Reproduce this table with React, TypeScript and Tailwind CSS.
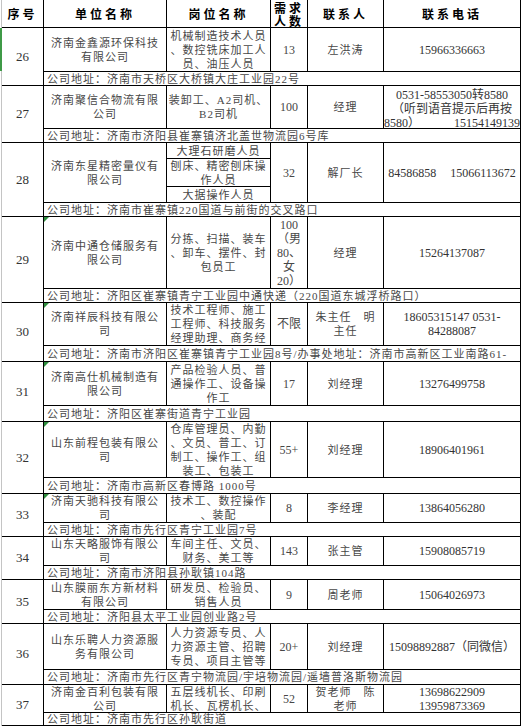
import React from "react";

type Row = {
  no: number;
  company: string[];
  jobs: string[] | string[][];
  count: string[];
  contact: string[];
  phone: React.ReactNode;
  addr: string;
  mark?: boolean;
};

const rows: Row[] = [
  {
    no: 26,
    company: ["济南金鑫源环保科技", "有限公司"],
    jobs: ["机械制造技术人员", "、数控铣床加工人", "员、油压人员"],
    count: ["13"],
    contact: ["左洪涛"],
    phone: "15966336663",
    addr: "公司地址：济南市天桥区大桥镇大庄工业园22号",
  },
  {
    no: 27,
    company: ["济南聚信合物流有限", "公司"],
    jobs: ["装卸工、A2司机、", "B2司机"],
    count: ["100"],
    contact: ["经理"],
    phone: (
      <div className="w-full pt-[3px]">
        <div>0531-58553050转8580</div>
        <div>（听到语音提示后再按</div>
        <div className="flex justify-between">
          <span>8580）</span>
          <span>15154149139</span>
        </div>
      </div>
    ),
    addr: "公司地址：济南市济阳县崔寨镇济北盖世物流园6号库",
  },
  {
    no: 28,
    company: ["济南东星精密量仪有", "限公司"],
    jobs: [["大理石研磨人员"], ["刨床、精密刨床操", "作人员"], ["大据操作人员"]],
    count: ["32"],
    contact: ["解厂长"],
    phone: (
      <span>
        84586858<span className="ml-[14px]">15066113672</span>
      </span>
    ),
    addr: "公司地址：济南市崔寨镇220国道与前街的交叉路口",
  },
  {
    no: 29,
    company: ["济南中通仓储服务有", "限公司"],
    jobs: ["分拣、扫描、装车", "、卸车、摆件、封", "包员工"],
    count: ["100", "（男", "80、", "女", "20）"],
    contact: ["经理"],
    phone: "15264137087",
    addr: "公司地址：济阳区崔寨镇青宁工业园中通快递（220国道东城浮桥路口）",
    mark: true,
  },
  {
    no: 30,
    company: ["济南祥辰科技有限公", "司"],
    jobs: ["技术工程师、施工", "工程师、科技服务", "经理助理、商务经"],
    count: ["不限"],
    contact: ["朱主任　明", "主任"],
    phone: (
      <div>
        <div>18605315147 0531-</div>
        <div>84288087</div>
      </div>
    ),
    addr: "公司地址：济南市济阳区崔寨镇青宁工业园8号/办事处地址：济南市高新区工业南路61-",
    mark: true,
  },
  {
    no: 31,
    company: ["济南高仕机械制造有", "限公司"],
    jobs: ["产品检验人员、普", "通操作工、设备操", "作工"],
    count: ["17"],
    contact: ["刘经理"],
    phone: "13276499758",
    addr: "公司地址：济阳区崔寨街道青宁工业园",
    mark: true,
  },
  {
    no: 32,
    company: ["山东前程包装有限公", "司"],
    jobs: ["仓库管理员、内勤", "、文员、普工、订", "制工、操作工、组", "装工、包装工"],
    count: ["55+"],
    contact: ["刘经理"],
    phone: "18906401961",
    addr: "公司地址：济南市高新区春博路 1000号",
    mark: true,
  },
  {
    no: 33,
    company: ["济南天驰科技有限公", "司"],
    jobs: ["技术工、数控操作", "、装配"],
    count: ["8"],
    contact: ["李经理"],
    phone: "13864056280",
    addr: "公司地址：济南市先行区青宁工业园7号",
    mark: true,
  },
  {
    no: 34,
    company: ["山东天略服饰有限公", "司"],
    jobs: ["车间主任、文员、", "财务、美工等"],
    count: ["143"],
    contact: ["张主管"],
    phone: "15908085719",
    addr: "公司地址：济南市济阳县孙耿镇104路",
  },
  {
    no: 35,
    company: ["山东膜丽东方新材料", "有限公司"],
    jobs: ["研发员、检验员、", "销售人员"],
    count: ["9"],
    contact: ["周老师"],
    phone: "15064026973",
    addr: "公司地址：济阳县太平工业园创业路2号",
  },
  {
    no: 36,
    company: ["山东乐聘人力资源服", "务有限公司"],
    jobs: ["人力资源专员、人", "力资源主管、招聘", "专员、项目主管等"],
    count: ["20+"],
    contact: ["刘经理"],
    phone: "15098892887（同微信）",
    addr: "公司地址：济南市先行区青宁物流园/宇培物流园/遥墙普洛斯物流园",
  },
  {
    no: 37,
    company: ["济南金百利包装有限", "公司"],
    jobs: ["五层线机长、印刷", "机长、瓦楞机长、"],
    count: ["52"],
    contact: ["贺老师　陈", "老师"],
    phone: (
      <div>
        <div>13698622909</div>
        <div>13959873369</div>
      </div>
    ),
    addr: "公司地址：济南市先行区孙耿街道",
  },
];

const cell =
  "bg-white flex items-center justify-center text-center overflow-hidden whitespace-nowrap";

const head =
  "bg-white flex items-center justify-center overflow-hidden whitespace-nowrap font-['Noto_Sans_CJK_SC',sans-serif] font-bold text-black text-[12px] tracking-[3px]";

function Lines({ items }: { items: string[] }) {
  return (
    <div>
      {items.map((t, i) => (
        <div key={i}>{t}</div>
      ))}
    </div>
  );
}

export default function App() {
  return (
    <div className="relative bg-white w-[523px] h-[726px] overflow-hidden font-['Liberation_Serif','Noto_Sans_CJK_SC',serif] text-[11px] tracking-[1px] leading-[14px] text-[#474747]">
      {/* selected row marker */}
      <div className="absolute left-0 top-[28px] w-[2px] h-[43px] bg-[#3f9a47]" />

      <div className="ml-px border-l border-[#c4c4c4] w-[520px]">
        <div className="grid grid-cols-[41px_122px_103px_36px_75px_136px] grid-rows-[27px_43px_13px_42px_13px_59px_13px_71px_13px_42px_15px_43px_15px_55px_15px_28px_13px_28px_13px_29px_13px_45px_14px_27px_12px] gap-px bg-black pr-px pb-px">
          {/* header */}
          <div className={head}>序号</div>
          <div className={head}>单位名称</div>
          <div className={head}>岗位名称</div>
          <div className={`${head} text-[11px] tracking-[1px] leading-[13px] text-center`}>
            <div>
              需求
              <br />
              人数
            </div>
          </div>
          <div className={head}>联系人</div>
          <div className={head}>联系电话</div>

          {rows.map((r) => (
            <React.Fragment key={r.no}>
              <div className={`${cell} row-span-2 text-[13px] tracking-normal text-[#333]`}>{r.no}</div>
              <div className={`${cell} relative`}>
                {r.mark && (
                  <div className="absolute left-0 top-0 w-0 h-0 border-t-[5px] border-r-[5px] border-t-[#2f8f3f] border-r-transparent" />
                )}
                <Lines items={r.company} />
              </div>
              {Array.isArray(r.jobs[0]) ? (
                <div className="grid grid-rows-[15px_27px_15px] gap-px bg-black">
                  {(r.jobs as string[][]).map((g, i) => (
                    <div key={i} className={cell}>
                      <Lines items={g} />
                    </div>
                  ))}
                </div>
              ) : (
                <div className={cell}>
                  <Lines items={r.jobs as string[]} />
                </div>
              )}
              <div className={`${cell} text-[12px] tracking-normal`}>
                <Lines items={r.count} />
              </div>
              <div className={cell}>
                <Lines items={r.contact} />
              </div>
              <div className={`${cell} text-[12px] tracking-normal text-[#333]`}>{r.phone}</div>
              <div className="col-span-5 bg-white flex items-center pl-[3px] overflow-hidden whitespace-nowrap">
                {r.addr}
              </div>
            </React.Fragment>
          ))}
        </div>
      </div>
    </div>
  );
}
